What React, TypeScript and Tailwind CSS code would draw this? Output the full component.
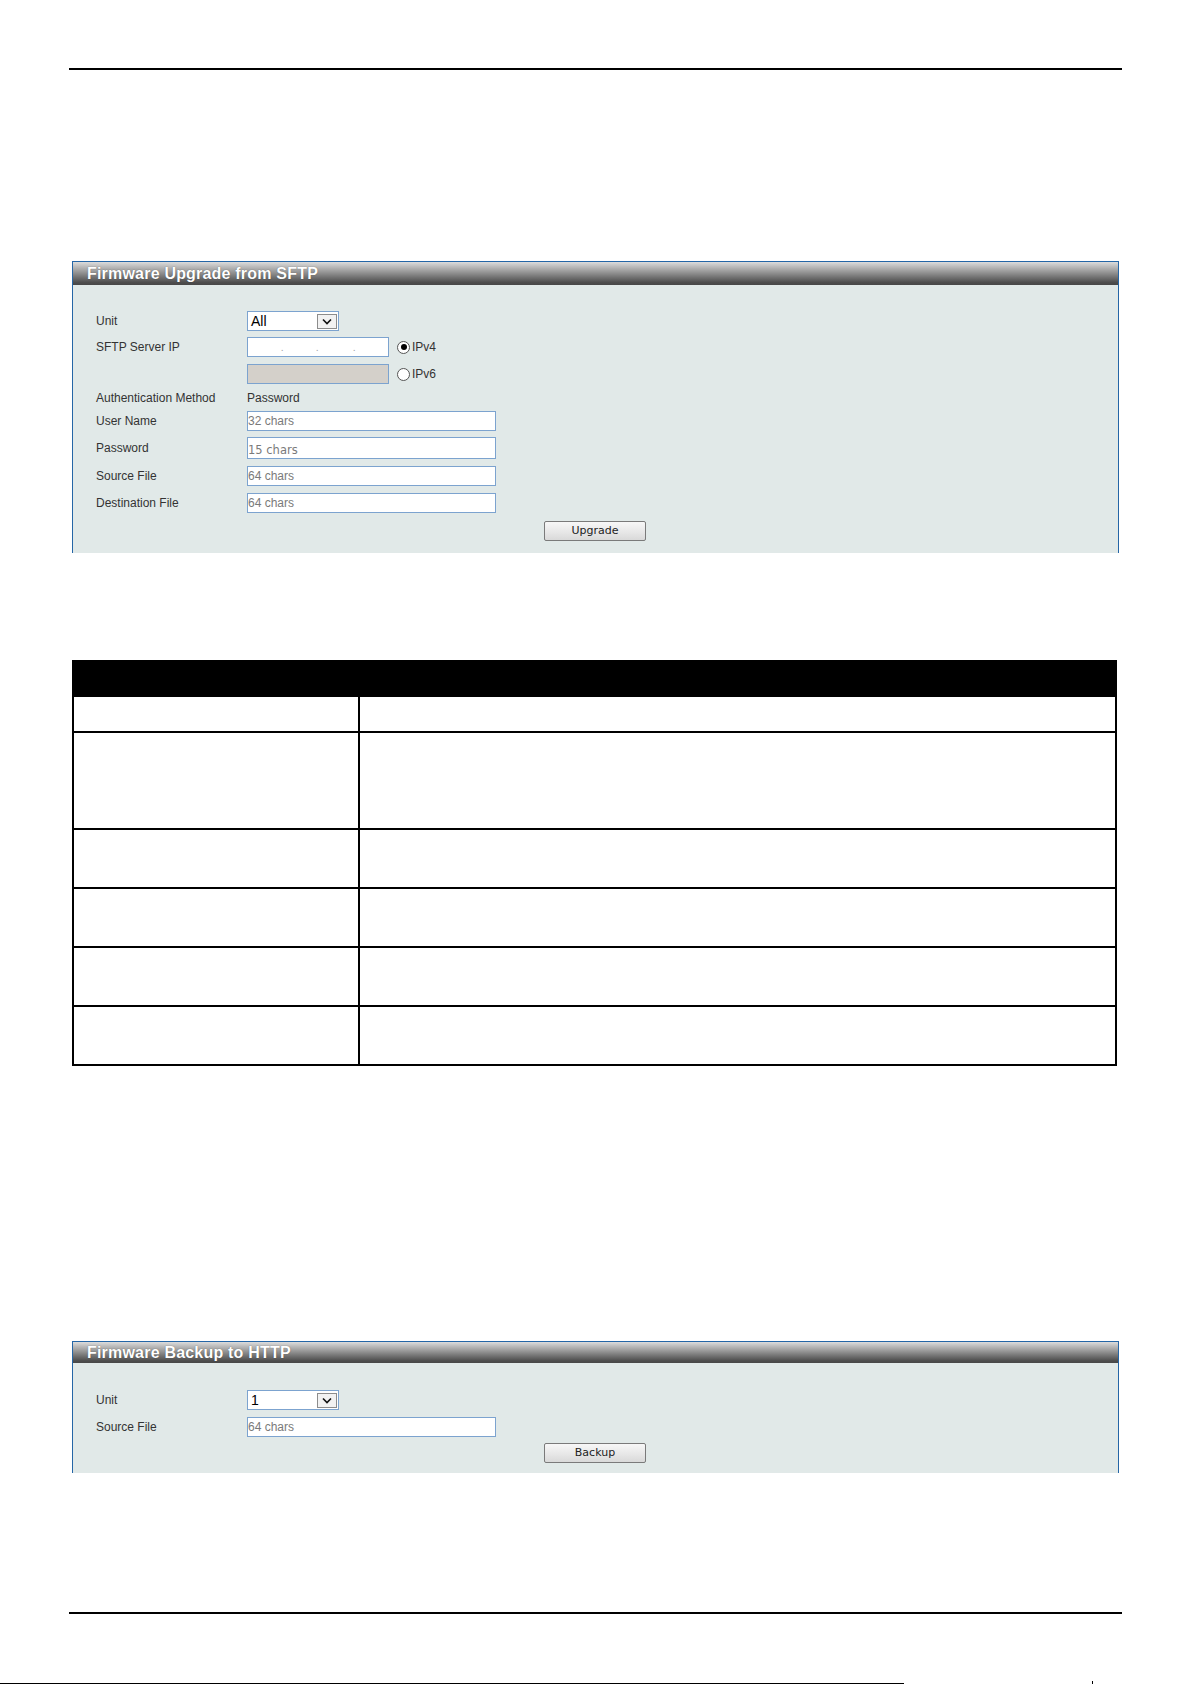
import React from "react";

const labelFont = "font-['Liberation_Sans',Arial,sans-serif] text-[12px] text-[#333]";

// rows of the description table, heights taken from the page
const tableRows = [36, 97, 59, 59, 59, 59];

function PanelHeader({ title, tall }: { title: string; tall?: boolean }) {
  return (
    <div
      className={`${tall ? "h-[23px]" : "h-[21px]"} flex items-center pl-[14px] bg-[linear-gradient(to_bottom,#dcdcdc,#b4b4b4_25%,#7c7c7c_60%,#4c4c4c_90%,#484848)]`}
    >
      <span className="font-['Liberation_Sans',Arial,sans-serif] text-[16px] font-bold tracking-[0.2px] text-white leading-none [text-shadow:0_0_1px_rgba(0,0,0,0.5)]">
        {title}
      </span>
    </div>
  );
}

function Chevron() {
  return (
    <svg width="10" height="7" viewBox="0 0 10 7">
      <path d="M1 1.5 L5 5.5 L9 1.5" fill="none" stroke="#111" strokeWidth="1.6" />
    </svg>
  );
}

function FakeSelect({ value }: { value: string }) {
  return (
    <div className="w-[92px] h-[20px] border border-[#7ca3cf] bg-white flex items-center justify-between pl-[3px] pr-[1px]">
      <span className="font-['Liberation_Sans',Arial,sans-serif] text-[14px] text-black leading-none">{value}</span>
      <div className="w-[20px] h-[15px] border border-[#8c8c8c] bg-[#f2f2f2] flex items-center justify-center">
        <Chevron />
      </div>
    </div>
  );
}

function TextBox({ hint, tall, alt }: { hint: string; tall?: boolean; alt?: boolean }) {
  return (
    <input
      readOnly
      placeholder={hint}
      className={`w-[249px] ${tall ? "h-[22px]" : "h-[20px]"} border border-[#7ca3cf] bg-white px-0 outline-none ${
        alt
          ? "font-['DejaVu_Sans',sans-serif] text-[11.5px] pt-[3px]"
          : "font-['Liberation_Sans',Arial,sans-serif] text-[12px]"
      } placeholder:text-[#7a7a7a]`}
    />
  );
}

function Radio({ checked, label }: { checked?: boolean; label: string }) {
  return (
    <div className="flex items-center ml-[8px] gap-[2px]">
      <div className="w-[13px] h-[13px] rounded-full border border-[#555] bg-white flex items-center justify-center">
        {checked && <div className="w-[6px] h-[6px] rounded-full bg-black" />}
      </div>
      <span className={labelFont}>{label}</span>
    </div>
  );
}

function Row({ label, className, children }: { label: string; className: string; children?: React.ReactNode }) {
  return (
    <div className={`flex items-center ${className}`}>
      <div className={`w-[151px] shrink-0 ${labelFont}`}>{label}</div>
      {children}
    </div>
  );
}

function Button({ text }: { text: string }) {
  return (
    <div className="flex justify-center pr-[1px]">
      <div className="w-[102px] h-[20px] border border-[#7a7a7a] rounded-[2px] bg-[linear-gradient(to_bottom,#f7f7f7,#e9e9e9_50%,#d9d9d9)] flex items-center justify-center font-['DejaVu_Sans',sans-serif] text-[11px] text-[#222]">
        {text}
      </div>
    </div>
  );
}

export default function App() {
  return (
    <div className="w-[1192px] h-[1684px] bg-white flex flex-col overflow-hidden">
      {/* page header rule */}
      <div className="mt-[68px] ml-[69px] w-[1053px] h-[2px] bg-black shrink-0" />

      {/* Firmware Upgrade from SFTP */}
      <div className="mt-[191px] ml-[72px] w-[1047px] border-x border-t border-[#2566a6] shrink-0">
        <PanelHeader title="Firmware Upgrade from SFTP" tall />
        <div className="h-[268px] bg-[#e1e9e8] pl-[23px] flex flex-col">
          <Row label="Unit" className="mt-[26px] h-[20px]">
            <FakeSelect value="All" />
          </Row>
          <Row label="SFTP Server IP" className="mt-[6px] h-[20px]">
            <div className="relative w-[142px] h-[20px] border border-[#7ca3cf] bg-white">
              <span className="absolute left-[33px] top-[5px] text-[9px] text-[#999] leading-none">.</span>
              <span className="absolute left-[68px] top-[5px] text-[9px] text-[#999] leading-none">.</span>
              <span className="absolute left-[105px] top-[5px] text-[9px] text-[#999] leading-none">.</span>
            </div>
            <Radio checked label="IPv4" />
          </Row>
          <Row label="" className="mt-[7px] h-[20px]">
            <div className="w-[142px] h-[20px] border border-[#7ca3cf] bg-[#d4d0ca]" />
            <Radio label="IPv6" />
          </Row>
          <Row label="Authentication Method" className="mt-[5px] h-[18px]">
            <span className={labelFont}>Password</span>
          </Row>
          <Row label="User Name" className="mt-[4px] h-[20px]">
            <TextBox hint="32 chars" />
          </Row>
          <Row label="Password" className="mt-[6px] h-[22px]">
            <TextBox hint="15 chars" tall alt />
          </Row>
          <Row label="Source File" className="mt-[7px] h-[20px]">
            <TextBox hint="64 chars" />
          </Row>
          <Row label="Destination File" className="mt-[7px] h-[20px]">
            <TextBox hint="64 chars" />
          </Row>
          <div className="mt-[8px] -ml-[23px]">
            <Button text="Upgrade" />
          </div>
        </div>
      </div>

      {/* description table */}
      <div className="mt-[107px] ml-[72px] w-[1045px] border-x-2 border-black shrink-0">
        <div className="h-[37px] bg-black" />
        {tableRows.map((h, i) => (
          <div key={i} className="flex border-b-2 border-black" style={{ height: h }}>
            <div className="w-[286px] border-r-2 border-black" />
            <div className="flex-1" />
          </div>
        ))}
      </div>

      {/* Firmware Backup to HTTP */}
      <div className="mt-[275px] ml-[72px] w-[1047px] border-x border-t border-[#2566a6] shrink-0">
        <PanelHeader title="Firmware Backup to HTTP" />
        <div className="h-[110px] bg-[#e1e9e8] pl-[23px] flex flex-col">
          <Row label="Unit" className="mt-[27px] h-[20px]">
            <FakeSelect value="1" />
          </Row>
          <Row label="Source File" className="mt-[7px] h-[20px]">
            <TextBox hint="64 chars" />
          </Row>
          <div className="mt-[6px] -ml-[23px]">
            <Button text="Backup" />
          </div>
        </div>
      </div>

      {/* page footer rules */}
      <div className="mt-[139px] ml-[69px] w-[1053px] h-[2px] bg-black shrink-0" />
      <div className="mt-[67px] flex items-end shrink-0">
        <div className="w-[904px] h-[2px] bg-black" />
        <div className="ml-[188px] w-px h-[4px] bg-black" />
      </div>
    </div>
  );
}
